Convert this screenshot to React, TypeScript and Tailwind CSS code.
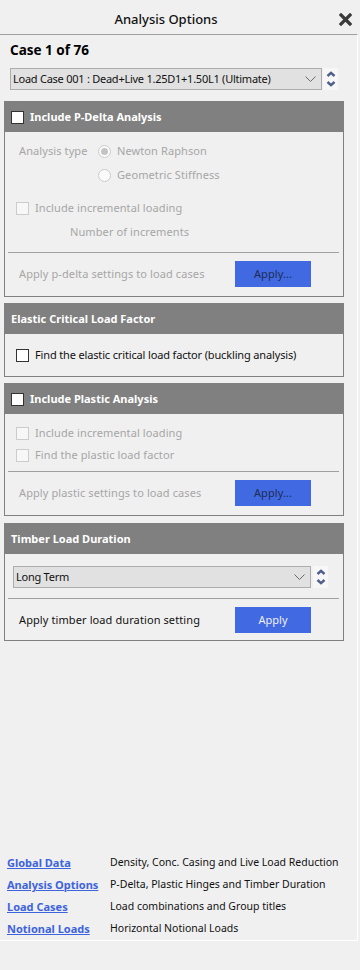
import React from 'react'

const FONT = "font-['Noto_Sans',sans-serif]"

function Box({ checked = false, disabled = false }: { checked?: boolean; disabled?: boolean }) {
  const cls = disabled ? 'border-[#cccccc] bg-[#f7f7f7]' : 'border-[#333] bg-white'
  return (
    <div className={`w-[13px] h-[13px] border shrink-0 ${cls}`}>
      {checked && <div className="w-full h-full bg-[#333]" />}
    </div>
  )
}

function Radio({ on = false }: { on?: boolean }) {
  return (
    <div className="w-[13px] h-[13px] rounded-full border border-[#cccccc] bg-[#fbfbfb] flex items-center justify-center shrink-0">
      {on && <div className="w-[7px] h-[7px] rounded-full bg-[#c4c4c4]" />}
    </div>
  )
}

function Spinner() {
  return (
    <div className="w-[15px] h-[22px] bg-[#f7f7f7] flex flex-col items-center justify-center gap-[4px]">
      <svg width="10" height="6" viewBox="0 0 10 6">
        <path d="M1.5 5 L5 1.8 L8.5 5" fill="none" stroke="#4f6088" strokeWidth="2.4" />
      </svg>
      <svg width="10" height="6" viewBox="0 0 10 6">
        <path d="M1.5 1 L5 4.2 L8.5 1" fill="none" stroke="#4f6088" strokeWidth="2.4" />
      </svg>
    </div>
  )
}

function Select({ text, width }: { text: string; width: string }) {
  return (
    <div className={`${width} h-[22px] bg-[#e1e1e1] border border-[#adadad] flex items-center pl-[2px] pr-[5px]`}>
      <span className="flex-1 text-[11px] text-[#111] whitespace-nowrap tracking-[-0.25px]">{text}</span>
      <svg width="11" height="7" viewBox="0 0 11 7">
        <path d="M0.5 0.5 L5.5 5.5 L10.5 0.5" fill="none" stroke="#6a6a6a" strokeWidth="1" />
      </svg>
    </div>
  )
}

function PanelHeader({ title, check }: { title: string; check?: boolean }) {
  return (
    <div className="h-[30px] bg-[#808080] flex items-center pl-[6px] gap-[6px]">
      {check && <Box />}
      <span className="text-[11px] font-bold text-white">{title}</span>
    </div>
  )
}

function ApplyRow({ label, button, enabled }: { label: string; button: string; enabled?: boolean }) {
  return (
    <div className="flex items-center h-[26px] pl-[14px]">
      <span className={`w-[216px] text-[11px] tracking-[0.1px] ${enabled ? 'text-[#111]' : 'text-[#a6a6a6]'}`}>{label}</span>
      <div
        className={`w-[76px] h-[26px] bg-[#4169e1] flex items-center justify-center text-[11px] ${enabled ? 'text-[#f0f0f0]' : 'text-[#1e2c55]'}`}
      >
        {button}
      </div>
    </div>
  )
}

const LINKS = [
  { name: 'Global Data', desc: 'Density, Conc. Casing and Live Load Reduction' },
  { name: 'Analysis Options', desc: 'P-Delta, Plastic Hinges and Timber Duration' },
  { name: 'Load Cases', desc: 'Load combinations and Group titles' },
  { name: 'Notional Loads', desc: 'Horizontal Notional Loads' },
]

export default function App() {
  return (
    <div className={`w-[360px] h-[970px] bg-[#f0f0f0] flex flex-col ${FONT}`}>
      {/* Title */}
      <div className="relative h-[34px] flex items-center justify-center pr-[28px]">
        <span className="text-[13px] font-medium text-[#111] pt-[5px]">Analysis Options</span>
        <svg className="absolute right-[8px] top-[13px]" width="13" height="13" viewBox="0 0 13 13">
          <path d="M2 2 L11 11 M11 2 L2 11" stroke="#3a3a3a" strokeWidth="3.2" strokeLinecap="square" />
        </svg>
      </div>

      <div className="w-[358px] h-[907px] border-t border-t-[#a0a0a0] border-r border-r-white border-b border-b-white flex flex-col">
        <div className="h-[20px] mt-[5px] pl-[10px] flex items-center text-[13.5px] font-bold text-black">Case 1 of 76</div>

        <div className="flex items-center gap-[1px] mt-[8px] pl-[10px]">
          <Select width="w-[312px]" text="Load Case 001 : Dead+Live 1.25D1+1.50L1 (Ultimate)" />
          <Spinner />
        </div>

        {/* P-Delta */}
        <div className="ml-[4px] mt-[11px] w-[340px] border border-[#808080]">
          <PanelHeader title="Include P-Delta Analysis" check />
          <div className="pt-[7px] pb-[9px] text-[11px] tracking-[0.1px] text-[#a6a6a6]">
            <div className="h-[24px] flex items-center pl-[14px]">
              <span className="w-[79px]">Analysis type</span>
              <Radio on />
              <span className="ml-[6px]">Newton Raphson</span>
            </div>
            <div className="h-[24px] flex items-center pl-[93px]">
              <Radio />
              <span className="ml-[6px]">Geometric Stiffness</span>
            </div>
            <div className="h-[24px] mt-[9px] flex items-center pl-[11px] gap-[6px]">
              <Box disabled />
              <span>Include incremental loading</span>
            </div>
            <div className="h-[24px] flex items-center pl-[65px]">Number of increments</div>
            <div className="h-px bg-[#a0a0a0] ml-[3px] mr-[4px] mt-[8px]" />
            <div className="mt-[8px]">
              <ApplyRow label="Apply p-delta settings to load cases" button="Apply..." />
            </div>
          </div>
        </div>

        {/* Elastic */}
        <div className="ml-[4px] mt-[6px] w-[340px] border border-[#808080]">
          <PanelHeader title="Elastic Critical Load Factor" />
          <div className="pt-[9px] pb-[9px]">
            <div className="h-[24px] flex items-center pl-[11px] gap-[6px] text-[11px] tracking-[-0.15px] text-[#111]">
              <Box />
              <span>Find the elastic critical load factor (buckling analysis)</span>
            </div>
          </div>
        </div>

        {/* Plastic */}
        <div className="ml-[4px] mt-[6px] w-[340px] border border-[#808080]">
          <PanelHeader title="Include Plastic Analysis" check />
          <div className="pt-[8px] pb-[9px] text-[11px] tracking-[0.1px] text-[#a6a6a6]">
            <div className="h-[22px] flex items-center pl-[11px] gap-[6px]">
              <Box disabled />
              <span>Include incremental loading</span>
            </div>
            <div className="h-[22px] flex items-center pl-[11px] gap-[6px]">
              <Box disabled />
              <span>Find the plastic load factor</span>
            </div>
            <div className="h-px bg-[#a0a0a0] ml-[3px] mr-[4px] mt-[5px]" />
            <div className="mt-[8px]">
              <ApplyRow label="Apply plastic settings to load cases" button="Apply..." />
            </div>
          </div>
        </div>

        {/* Timber */}
        <div className="ml-[4px] mt-[7px] w-[340px] border border-[#808080]">
          <PanelHeader title="Timber Load Duration" />
          <div className="pt-[12px] pb-[7px]">
            <div className="flex items-center gap-[2px] pl-[8px]">
              <Select width="w-[298px]" text="Long Term" />
              <Spinner />
            </div>
            <div className="h-px bg-[#a0a0a0] ml-[3px] mr-[4px] mt-[10px]" />
            <div className="mt-[8px]">
              <ApplyRow label="Apply timber load duration setting" button="Apply" enabled />
            </div>
          </div>
        </div>

        <div className="flex-1" />

        {/* Footer links */}
        <div className="flex flex-col">
          {LINKS.map((l) => (
            <div key={l.name} className="h-[22px] flex items-center pl-[7px] whitespace-nowrap">
              <span className="w-[103px] text-[11px] font-bold text-[#3d63dd] underline">{l.name}</span>
              <span className="text-[10.5px] text-[#111]">{l.desc}</span>
            </div>
          ))}
        </div>
      </div>
    </div>
  )
}
